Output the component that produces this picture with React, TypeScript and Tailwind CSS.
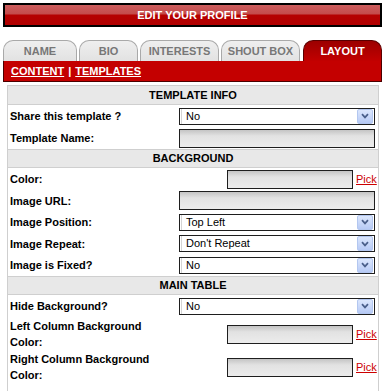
import React from 'react'

const TABS = [
  { name: 'NAME', w: 'w-[74px]' },
  { name: 'BIO', w: 'w-[59px]' },
  { name: 'INTERESTS', w: 'w-[79px]' },
  { name: 'SHOUT BOX', w: 'w-[79px]' },
]

function Chevron() {
  return (
    <span className="flex h-[15px] w-[16px] shrink-0 items-center justify-center rounded-[2px] border border-[#b3c7f0] bg-gradient-to-b from-[#dce7fd] to-[#b7caf5]">
      <svg width="8" height="6" viewBox="0 0 8 6">
        <path d="M1 1.2 L4 4.4 L7 1.2" fill="none" stroke="#4a5f8a" strokeWidth="1.7" />
      </svg>
    </span>
  )
}

function Select({ value }: { value: string }) {
  return (
    <div className="flex h-[17px] w-[196px] items-center border border-[#1e1e1e] bg-white px-[1px]">
      <div className="h-full flex-1 border-l border-[#d4d4d4] pl-[4px] text-[11px] leading-[15px] text-black">
        {value}
      </div>
      <Chevron />
    </div>
  )
}

function TextInput({ w }: { w: string }) {
  return (
    <div
      className={`h-[19px] ${w} border border-[#1e1e1e] bg-[linear-gradient(to_bottom,#c4c4c4_0%,#e2e2e2_35%,#ececec_100%)]`}
    />
  )
}

function ColorInput() {
  return (
    <div className="ml-[48px] flex items-center gap-[3px]">
      <TextInput w="w-[126px]" />
      <a className="text-[11px] leading-none text-[#cc0000] underline">Pick</a>
    </div>
  )
}

function Row({ label, h, children }: { label: string; h: string; children: React.ReactNode }) {
  return (
    <div className={`flex ${h} items-center`}>
      <div className="w-[171px] pl-[2px]">
        <div className="max-w-[148px] text-[11px] font-bold leading-[16px] text-black">{label}</div>
      </div>
      <div className="flex flex-1 items-center">{children}</div>
    </div>
  )
}

function Section({ title, top }: { title: string; top?: boolean }) {
  return (
    <div
      className={`flex h-[19px] items-center justify-center border-b border-[#cfcfcf] bg-[#e8e8e8] text-[11px] font-bold text-black ${
        top ? '' : 'border-t'
      }`}
    >
      {title}
    </div>
  )
}

export default function App() {
  return (
    <div className="min-h-[391px] w-[385px] bg-white pt-[3px] font-['Liberation_Sans',Arial,sans-serif]">
      {/* page title */}
      <div className="ml-[3px] flex h-[24px] w-[379px] items-center justify-center border-2 border-black bg-[linear-gradient(to_bottom,#cd5e5e_0%,#c44a4a_45%,#b50000_50%,#b00000_100%)] text-[11px] font-bold text-white">
        EDIT YOUR PROFILE
      </div>

      {/* tabs */}
      <div className="ml-[3px] mt-[13px] flex items-end gap-[2px]">
        {TABS.map(t => (
          <div
            key={t.name}
            className={`flex h-[21px] ${t.w} items-center justify-center rounded-t-[10px] border border-b-0 border-[#a9a9a9] bg-gradient-to-b from-[#efefef] to-[#e2e2e2] text-[11px] font-bold text-[#777]`}
          >
            {t.name}
          </div>
        ))}
        <div className="ml-[1px] flex h-[21px] w-[79px] items-center justify-center rounded-t-[10px] border border-b-0 border-[#5a0000] bg-gradient-to-b from-[#9c0000] to-[#c20000] text-[11px] font-bold text-white">
          LAYOUT
        </div>
      </div>
      <div className="ml-[3px] flex h-[21px] w-[379px] items-center border-x border-b border-[#4a0000] bg-[#c40000] pl-[7px] text-[11px] font-bold text-white">
        <a className="underline">CONTENT</a>
        <span className="mx-[4px]">|</span>
        <a className="underline">TEMPLATES</a>
      </div>

      {/* form panel */}
      <div className="ml-[7px] mt-[3px] w-[372px] border-x border-t border-[#cfcfcf] pb-[20px]">
        <Section title="TEMPLATE INFO" top />
        <Row label="Share this template ?" h="h-[22px]">
          <Select value="No" />
        </Row>
        <Row label="Template Name:" h="h-[22px]">
          <TextInput w="w-[196px]" />
        </Row>
        <Section title="BACKGROUND" />
        <Row label="Color:" h="h-[22px]">
          <ColorInput />
        </Row>
        <Row label="Image URL:" h="h-[21px]">
          <TextInput w="w-[196px]" />
        </Row>
        <Row label="Image Position:" h="h-[22px]">
          <Select value="Top Left" />
        </Row>
        <Row label="Image Repeat:" h="h-[21px]">
          <Select value="Don't Repeat" />
        </Row>
        <Row label="Image is Fixed?" h="h-[22px]">
          <Select value="No" />
        </Row>
        <Section title="MAIN TABLE" />
        <Row label="Hide Background?" h="h-[22px]">
          <Select value="No" />
        </Row>
        <Row label="Left Column Background Color:" h="h-[34px]">
          <ColorInput />
        </Row>
        <Row label="Right Column Background Color:" h="h-[32px]">
          <ColorInput />
        </Row>
      </div>
    </div>
  )
}
